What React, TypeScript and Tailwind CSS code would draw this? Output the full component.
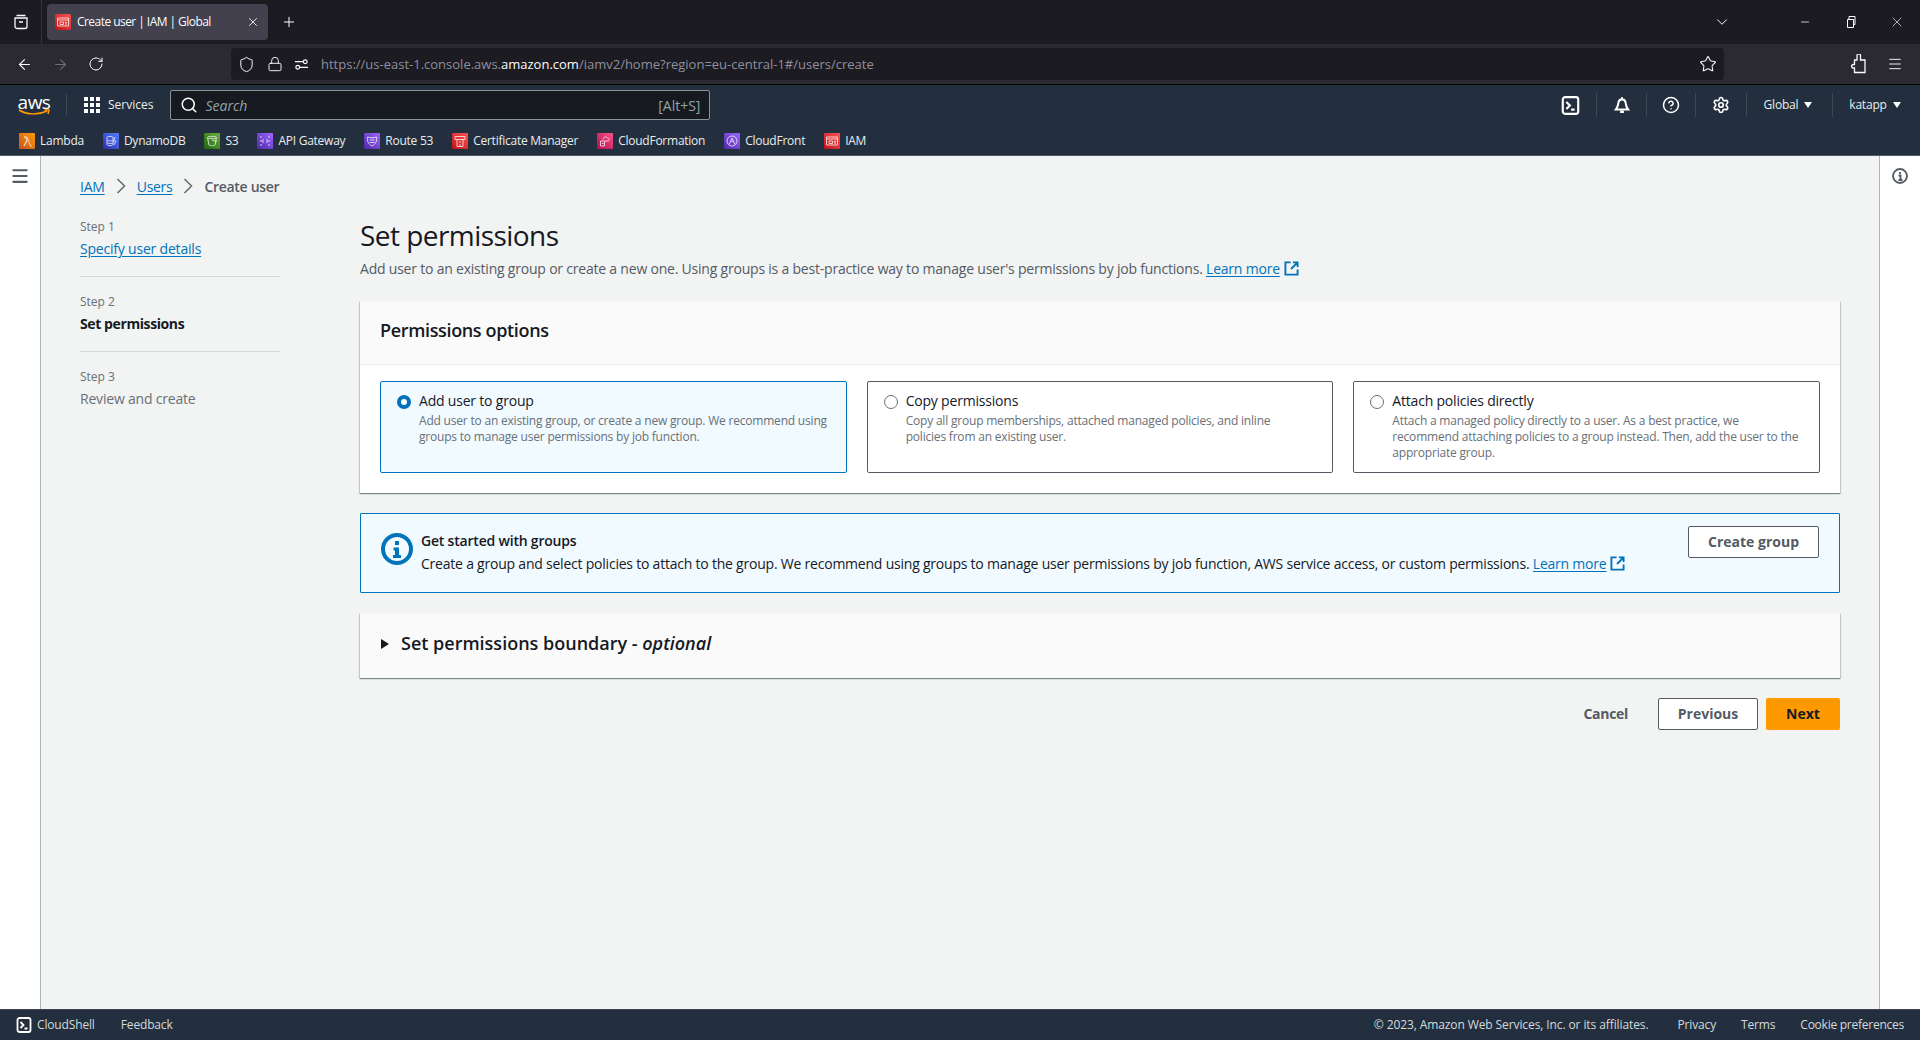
import type { ReactNode } from 'react';
import {
  ArrowLeft,
  ArrowRight,
  ChevronDown,
  CircleHelp,
  Lock,
  Menu,
  Minus,
  Plus,
  RotateCw,
  Search,
  Settings,
  Shield,
  Star,
  X,
} from 'lucide-react';

const iamGlyph = <path d="M2.500 4h11v8h-11zM2.500 6h11M5 8h3.500v2.500H5zM10 8.500h2M10 10h2" />;

const favorites: { name: string; gradient: string; glyph: ReactNode }[] = [
  {
    name: 'Lambda',
    gradient: 'from-[#c8511b] to-[#ff9900]',
    glyph: <path d="M5 13 8 7 6.500 4H5M5 4h3l3.500 9H13M8 8l-3 5" />,
  },
  {
    name: 'DynamoDB',
    gradient: 'from-[#2e27ad] to-[#527fff]',
    glyph: <path d="M4 4.500c0-1.500 6-1.500 6 0v7c0 1.500-6 1.500-6 0zM4 7c0 1.200 6 1.200 6 0M4 9.500c0 1.200 6 1.200 6 0M12 4 10.500 8H13l-2 4" />,
  },
  {
    name: 'S3',
    gradient: 'from-[#1b660f] to-[#6cae3e]',
    glyph: <path d="M3.500 4.500c0-1.500 9-1.500 9 0L11 12c0 1-5 1-6 0zM3.500 4.500c0 1.500 9 1.500 9 0M8 7l5 1.500" />,
  },
  {
    name: 'API Gateway',
    gradient: 'from-[#4d27a8] to-[#a166ff]',
    glyph: <path d="M4 3v2m0 2v2m0 2v2M12 3v2m0 2v2m0 2v2M6.500 6 5.500 8l1 2M9.500 6l1 2-1 2" />,
  },
  {
    name: 'Route 53',
    gradient: 'from-[#4d27a8] to-[#a166ff]',
    glyph: <path d="M3.500 4C6 5 10 5 12.500 4c.5 4-.5 7-4.500 9C4 11 3 8 3.500 4zM5.500 7h5M5.500 9.500h5" />,
  },
  {
    name: 'Certificate Manager',
    gradient: 'from-[#bd0816] to-[#ff5252]',
    glyph: <path d="M3 3.500h10v3H3zM5 6.500v7h6v-7M7 9h2M8 11v2" />,
  },
  {
    name: 'CloudFormation',
    gradient: 'from-[#b0084d] to-[#ff4f8b]',
    glyph: <path d="M6 6.500C6 4 9 3 10.500 5c2 0 2.500 2.500.5 3H8M3.500 8h4v5h-4zM5 10.500h1.500" />,
  },
  {
    name: 'CloudFront',
    gradient: 'from-[#4d27a8] to-[#a166ff]',
    glyph: <path d="M8 3a5 5 0 1 0 0 10A5 5 0 0 0 8 3zM5 11.500 8 5l3 6.500M6 9c1.500-1 2.500-1 4 0" />,
  },
  {
    name: 'IAM',
    gradient: 'from-[#bd0816] to-[#ff5252]',
    glyph: iamGlyph,
  },
];

const steps = [
  { label: 'Step 1', title: 'Specify user details', state: 'link' },
  { label: 'Step 2', title: 'Set permissions', state: 'current' },
  { label: 'Step 3', title: 'Review and create', state: 'disabled' },
];

function TerminalIcon({ className }: { className: string }) {
  return (
    <svg viewBox="0 0 16 16" fill="none" stroke="currentColor" strokeWidth="1.800" className={className}>
      <rect x="1.500" y="1" width="13" height="14" rx="2" />
      <path d="M4.500 5 7.500 8 4.500 11M8.500 11.500h3" />
    </svg>
  );
}

function NewTabIcon() {
  return (
    <svg
      viewBox="0 0 16 16"
      fill="none"
      stroke="#0073bb"
      strokeWidth="2"
      className="inline-block w-[15px] h-[15px] ml-[4px] align-[-2px]"
    >
      <path d="M7 1.500H1.500v13h13V9M9.500 1.500h5v5M14 2 7.500 8.500" />
    </svg>
  );
}

function Crumb() {
  return (
    <svg viewBox="0 0 10 16" fill="none" stroke="#687078" strokeWidth="1.600" className="w-[10px] h-[16px] mx-[11px]">
      <path d="M1.500 1 8.500 8l-7 7" />
    </svg>
  );
}

function OptionCard({
  title,
  lines,
  selected,
}: {
  title: string;
  lines: string[];
  selected?: boolean;
}) {
  return (
    <div
      className={`h-[92px] flex gap-[7px] pl-[16px] pt-[9px] border rounded-[2px] ${
        selected ? 'border-[#0073bb] bg-[#f1faff]' : 'border-[#545b64] bg-white'
      }`}
    >
      <span
        className={`w-[14px] h-[14px] mt-[4px] mr-[1px] rounded-full bg-white shrink-0 ${
          selected ? 'border-[4px] border-[#0073bb]' : 'border border-[#687078]'
        }`}
      />
      <div>
        <div className="text-[14px] leading-[20px] text-[#16191f]">{title}</div>
        <div className="text-[12px] leading-[16px] text-[#687078] mt-[2px] whitespace-nowrap">
          {lines.map((line) => (
            <div key={line}>{line}</div>
          ))}
        </div>
      </div>
    </div>
  );
}

function BrowserChrome() {
  return (
    <div className="font-['Open_Sans',sans-serif] text-[#fbfbfe]">
      <div className="h-[44px] bg-[#1c1b22] flex items-center">
        <div className="w-[42px] h-full flex items-center justify-center border-r border-[#33323b]">
          <svg viewBox="0 0 16 16" fill="none" stroke="currentColor" strokeWidth="1.300" className="w-[16px] h-[16px]">
            <path d="M3.500 1.500h9M2 4h12v8.500a2 2 0 0 1-2 2H4a2 2 0 0 1-2-2zM6 8h4" />
          </svg>
        </div>
        <div className="ml-[5px] w-[221px] h-[36px] rounded-[4px] bg-[#42414d] flex items-center pl-[8px] pr-[8px]">
          <div className="w-[16px] h-[16px] rounded-[2px] bg-linear-to-tr from-[#bd0816] to-[#ff5252]">
            <svg viewBox="0 0 16 16" fill="none" stroke="white" strokeWidth="1" className="w-[16px] h-[16px] opacity-75">
              {iamGlyph}
            </svg>
          </div>
          <span className="ml-[6px] flex-1 text-[12px] tracking-[-0.55px] whitespace-nowrap">Create user | IAM | Global</span>
          <X className="w-[14px] h-[14px]" strokeWidth={1.5} />
        </div>
        <Plus className="ml-[13px] w-[16px] h-[16px]" strokeWidth={1.5} />
        <div className="ml-auto flex items-center">
          <ChevronDown className="w-[18px] h-[18px] mr-[68px]" strokeWidth={1.300} />
          <Minus className="w-[12px] h-[12px] mr-[34px]" strokeWidth={1.500} />
          <svg viewBox="0 0 12 12" fill="none" stroke="currentColor" className="w-[12px] h-[12px] mr-[32px]">
            <path d="M2.500 3.500h6v8h-6zM4 3.500v-3h6v8H8.500" />
          </svg>
          <X className="w-[16px] h-[16px] mr-[15px]" strokeWidth={1} />
        </div>
      </div>
      <div className="h-[41px] bg-[#2b2a33] border-b border-black flex items-center">
        <ArrowLeft className="ml-[16px] w-[17px] h-[17px]" strokeWidth={1.500} />
        <ArrowRight className="ml-[19px] w-[17px] h-[17px] text-[#6f6e75]" strokeWidth={1.500} />
        <RotateCw className="ml-[19px] w-[16px] h-[16px]" strokeWidth={1.500} />
        <div className="ml-[127px] w-[1493px] h-[32px] rounded-[4px] bg-[#1c1b22] flex items-center">
          <Shield className="ml-[7px] w-[17px] h-[17px]" strokeWidth={1.400} />
          <Lock className="ml-[12px] w-[16px] h-[16px]" strokeWidth={1.400} />
          <svg viewBox="0 0 16 16" fill="none" stroke="currentColor" strokeWidth="1.300" className="ml-[11px] w-[15px] h-[15px]">
            <circle cx="4" cy="11" r="2" />
            <circle cx="12" cy="5" r="2" />
            <path d="M1 5h9M6 11h9" />
          </svg>
          <span className="ml-[12px] mt-[1px] text-[13px] text-[#8f8f9d] whitespace-nowrap">
            https://us-east-1.console.aws.<span className="text-[#fbfbfe]">amazon.com</span>/iamv2/home?region=eu-central-1#/users/create
          </span>
          <Star className="ml-auto mr-[7px] w-[18px] h-[18px]" strokeWidth={1.400} />
        </div>
        <svg viewBox="0 0 16 20" fill="none" stroke="currentColor" strokeWidth="1.300" className="ml-[127px] w-[16px] h-[20px]">
          <path d="M6 1.500a1.700 1.700 0 0 1 3.500 0V6H14v12.500H3.500V14H2a1.800 1.800 0 0 1 0-3.500h1.500V6H6z" />
        </svg>
        <Menu className="ml-[20px] w-[16px] h-[16px]" strokeWidth={1.400} />
      </div>
    </div>
  );
}

function AwsNav() {
  return (
    <nav className="bg-[#232f3e] border-b border-[#545b64] text-[#eaeded] font-['Open_Sans',sans-serif]">
      <div className="h-[40px] flex items-center">
        <div className="ml-[18px] w-[32px] flex flex-col items-center">
          <span className="text-[19px] leading-[14px] tracking-[-0.5px] text-white">aws</span>
          <svg viewBox="0 0 32 7" className="w-[32px] h-[7px]" fill="none" stroke="#ff9900" strokeWidth="1.500">
            <path d="M1 1c8 5 20 5 28 1M26.500 1H31l-1 4" />
          </svg>
        </div>
        <span className="ml-[16px] w-px h-[22px] bg-[#414750]" />
        <div className="ml-[17px] grid grid-cols-3 gap-[2px] w-[16px]">
          {Array.from({ length: 9 }).map((_, i) => (
            <span key={i} className="w-[4px] h-[4px] bg-white" />
          ))}
        </div>
        <span className="ml-[8px] text-[12px]">Services</span>
        <div className="ml-[17px] w-[540px] h-[30px] bg-[#16191f] border border-[#879596] rounded-[2px] flex items-center pl-[9px] pr-[9px]">
          <Search className="w-[18px] h-[18px] text-white" strokeWidth={2} />
          <span className="ml-[7px] text-[14px] italic text-[#95a5a6]">Search</span>
          <span className="ml-auto text-[14px] text-[#95a5a6]">[Alt+S]</span>
        </div>
        <div className="ml-auto flex items-center h-[24px] text-[12px]">
          <div className="w-[51px] h-full border-r border-[#414750] flex items-center justify-center pr-[1px]">
            <TerminalIcon className="w-[19px] h-[19px] text-white" />
          </div>
          <div className="w-[50px] h-full border-r border-[#414750] flex items-center justify-center">
            <svg viewBox="0 0 16 16" fill="none" stroke="white" strokeWidth="1.800" className="w-[18px] h-[18px]">
              <path d="M8 1v2M2.500 12c1.500-2 2-3.500 2.200-5.500C4.900 4.500 6.200 3 8 3s3.100 1.500 3.300 3.500c.2 2 .7 3.500 2.200 5.500z" />
              <path d="M6.300 14h3.400" strokeWidth="2.200" />
            </svg>
          </div>
          <div className="w-[49px] h-full border-r border-[#414750] flex items-center justify-center">
            <CircleHelp className="w-[18px] h-[18px] text-white" strokeWidth={2} />
          </div>
          <div className="w-[51px] h-full border-r border-[#414750] flex items-center justify-center">
            <Settings className="w-[18px] h-[18px] text-white" strokeWidth={2.200} />
          </div>
          <div className="w-[86px] h-full border-r border-[#414750] flex items-center justify-center gap-[6px] tracking-[-0.2px] pr-[3px]">
            Global
            <span className="w-0 h-0 border-x-[4px] border-x-transparent border-t-[6px] border-t-white" />
          </div>
          <div className="w-[87px] h-full flex items-center justify-center gap-[6px] tracking-[-0.2px] pr-[3px]">
            katapp
            <span className="w-0 h-0 border-x-[4px] border-x-transparent border-t-[6px] border-t-white" />
          </div>
        </div>
      </div>
      <div className="h-[30px] flex items-center pl-[19px] pt-[1px] gap-[19px] text-[12px] tracking-[-0.25px]">
        {favorites.map((fav) => (
          <div key={fav.name} className="flex items-center gap-[5px]">
            <div className={`w-[16px] h-[16px] rounded-[1px] bg-linear-to-tr ${fav.gradient}`}>
              <svg viewBox="0 0 16 16" fill="none" stroke="white" strokeWidth="1" className="w-[16px] h-[16px] opacity-75">
                {fav.glyph}
              </svg>
            </div>
            {fav.name}
          </div>
        ))}
      </div>
    </nav>
  );
}

function Steps() {
  return (
    <div className="w-[200px] shrink-0">
      {steps.map((step, i) => (
        <div key={step.label} className={i < 2 ? 'h-[75px]' : ''}>
          <div className="text-[12px] leading-[16px] text-[#687078] tracking-normal">{step.label}</div>
          <div
            className={`mt-[4px] text-[14px] leading-[20px] ${
              step.state === 'link'
                ? 'text-[#0073bb] underline underline-offset-2'
                : step.state === 'current'
                  ? 'font-bold text-[#16191f] tracking-[-0.4px]'
                  : 'text-[#687078]'
            }`}
          >
            {step.title}
          </div>
          {i < 2 && <div className="mt-[17px] h-px bg-[#d5dbdb]" />}
        </div>
      ))}
    </div>
  );
}

function SetPermissions() {
  return (
    <div className="w-[1480px]">
      <h1 className="h-[36px] text-[28px] leading-[33px] tracking-[-0.55px] text-[#16191f]">Set permissions</h1>
      <p className="mt-[4px] text-[14px] leading-[20px] tracking-[-0.21px] text-[#545b64]">
        Add user to an existing group or create a new one. Using groups is a best-practice way to manage user's permissions by job functions.{' '}
        <span className="text-[#0073bb] underline underline-offset-2">Learn more</span>
        <NewTabIcon />
      </p>

      <section className="mt-[22px] bg-white shadow-[0_1px_1px_0_rgba(0,28,36,0.3),1px_1px_1px_0_rgba(0,28,36,0.15),-1px_1px_1px_0_rgba(0,28,36,0.15)]">
        <div className="h-[64px] bg-[#fafafa] border-b border-[#eaeded] flex items-center pl-[20px] pb-[4px]">
          <h2 className="text-[18px] font-semibold tracking-[-0.35px] text-[#16191f]">Permissions options</h2>
        </div>
        <div className="grid grid-cols-3 gap-[20px] px-[20px] pt-[16px] pb-[20px]">
          <OptionCard
            selected
            title="Add user to group"
            lines={[
              'Add user to an existing group, or create a new group. We recommend using',
              'groups to manage user permissions by job function.',
            ]}
          />
          <OptionCard
            title="Copy permissions"
            lines={[
              'Copy all group memberships, attached managed policies, and inline',
              'policies from an existing user.',
            ]}
          />
          <OptionCard
            title="Attach policies directly"
            lines={[
              'Attach a managed policy directly to a user. As a best practice, we',
              'recommend attaching policies to a group instead. Then, add the user to the',
              'appropriate group.',
            ]}
          />
        </div>
      </section>

      <div className="mt-[20px] h-[80px] border border-[#0073bb] bg-[#f1faff] rounded-[1px] flex pl-[20px] pr-[20px]">
        <svg viewBox="0 0 32 32" className="w-[32px] h-[32px] mt-[19px] shrink-0" fill="none">
          <circle cx="16" cy="16" r="14" stroke="#0073bb" strokeWidth="4" />
          <rect x="14" y="8" width="4" height="4" fill="#0073bb" />
          <path d="M12.500 14.500H18V22h2v3h-8v-3h2v-4.500h-1.500z" fill="#0073bb" />
        </svg>
        <div className="ml-[8px] mt-[17px] text-[#16191f]">
          <div className="text-[14px] leading-[20px] font-semibold tracking-[-0.2px]">Get started with groups</div>
          <div className="mt-[3px] text-[14px] leading-[20px] tracking-[-0.22px] whitespace-nowrap">
            Create a group and select policies to attach to the group. We recommend using groups to manage user permissions by job function, AWS service access, or custom permissions.{' '}
            <span className="text-[#0073bb] underline underline-offset-2">Learn more</span>
            <NewTabIcon />
          </div>
        </div>
        <button className="ml-auto mt-[12px] w-[131px] h-[32px] pb-[2px] bg-white border border-[#545b64] rounded-[2px] text-[14px] font-bold tracking-normal text-[#545b64]">
          Create group
        </button>
      </div>

      <div className="mt-[20px] h-[65px] pb-[4px] bg-[#fafafa] shadow-[0_1px_1px_0_rgba(0,28,36,0.3),1px_1px_1px_0_rgba(0,28,36,0.15),-1px_1px_1px_0_rgba(0,28,36,0.15)] flex items-center pl-[21px]">
        <span className="w-0 h-0 border-y-[5px] border-y-transparent border-l-[8px] border-l-[#16191f]" />
        <h2 className="ml-[12px] text-[18px] font-semibold tracking-normal text-[#16191f]">
          Set permissions boundary - <em className="font-semibold">optional</em>
        </h2>
      </div>

      <div className="mt-[20px] flex items-center justify-end text-[14px] font-bold tracking-normal">
        <span className="text-[#545b64] mr-[30px] pb-[2px] tracking-[-0.3px]">Cancel</span>
        <button className="w-[100px] h-[32px] pb-[2px] bg-white border border-[#545b64] rounded-[2px] text-[#545b64]">Previous</button>
        <button className="ml-[8px] w-[74px] h-[32px] pb-[2px] bg-[#ff9900] rounded-[2px] text-[#16191f]">Next</button>
      </div>
    </div>
  );
}

export default function App() {
  return (
    <div className="h-screen flex flex-col overflow-hidden bg-white">
      <BrowserChrome />
      <AwsNav />
      <div className="flex-1 flex min-h-0 font-['Open_Sans',sans-serif] tracking-[-0.2px]">
        <div className="w-[41px] shrink-0 border-r border-[#aab7b8] flex justify-center pt-[10px]">
          <Menu className="w-[20px] h-[20px] text-[#545b64]" strokeWidth={2.500} />
        </div>
        <main className="flex-1 bg-[#f2f3f3] pl-[39px] pt-[20px]">
          <div className="h-[20px] flex items-center text-[14px]">
            <span className="text-[#0073bb] underline underline-offset-2">IAM</span>
            <Crumb />
            <span className="text-[#0073bb] underline underline-offset-2 tracking-[-0.3px]">Users</span>
            <Crumb />
            <span className="font-semibold tracking-[-0.3px] text-[#545b64]">Create user</span>
          </div>
          <div className="mt-[23px] flex gap-[80px]">
            <Steps />
            <SetPermissions />
          </div>
        </main>
        <div className="w-[41px] shrink-0 border-l border-[#aab7b8] flex justify-center pt-[12px]">
          <svg viewBox="0 0 16 16" fill="none" stroke="#545b64" strokeWidth="1.800" className="w-[16px] h-[16px]">
            <circle cx="8" cy="8" r="7" />
            <path d="M8 4v2M6.500 7.500H8.500V12M6.500 12h4" />
          </svg>
        </div>
      </div>
      <footer className="h-[31px] shrink-0 bg-[#232f3e] border-t border-[#414750] flex items-center font-['Open_Sans',sans-serif] text-[12px] tracking-[-0.15px] text-[#d5dbdb] pl-[16px] pr-[16px]">
        <TerminalIcon className="w-[16px] h-[16px] text-white" />
        <span className="ml-[5px]">CloudShell</span>
        <span className="ml-[26px]">Feedback</span>
        <span className="ml-auto tracking-[-0.1px]">© 2023, Amazon Web Services, Inc. or its affiliates.</span>
        <span className="ml-[29px]">Privacy</span>
        <span className="ml-[25px]">Terms</span>
        <span className="ml-[25px] tracking-[-0.25px]">Cookie preferences</span>
      </footer>
    </div>
  );
}
